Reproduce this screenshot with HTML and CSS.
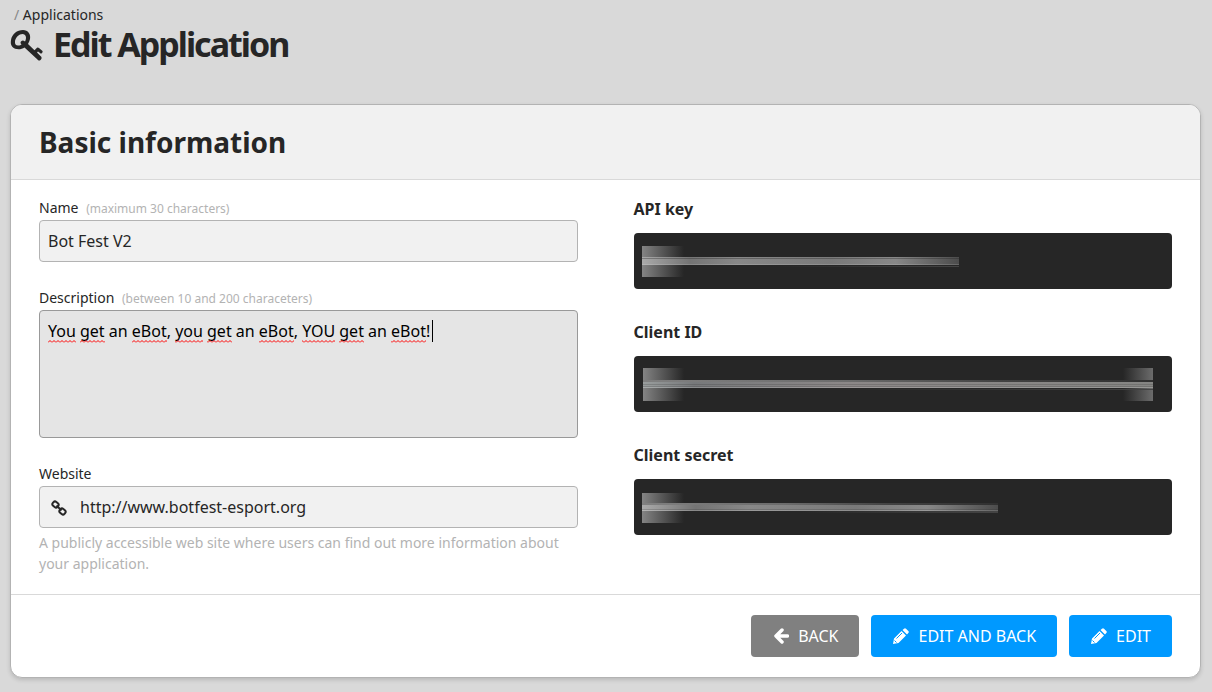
FILE: index.html
```
<!DOCTYPE html>
<html lang="en">

<head>
    <meta charset="UTF-8">
    <meta name="viewport" content="width=device-width, initial-scale=1.0">
    <title>Edit Application</title>
    <link rel="stylesheet" href="styles.css">
</head>

<body>
    <header class="page-header">
        <nav class="breadcrumb"><span>/</span> <a href="#">Applications</a></nav>
        <h1>
            <svg class="key-icon" viewBox="0 0 34 32" aria-hidden="true">
                <path d="M1 10 C2 4 7 0 13 0 C18 0 21 4 20 9 C19.500 11 18.500 13 18 14 L24.500 20.200 L27 17.800 Q28 17 29 18 L32.500 21 Q33 22 32 23 Q31 24 30 23 L28 21.500 L27 22.500 L31.500 27 Q32 29 30.500 30 Q29 31 28 30 L14.500 17.500 C11 20 5 19.800 2.500 17 C.8 15 .5 13 1 10 Z M5 11 C4.500 14 6 15.500 8 15.500 C10 15.500 11 15 11.500 14.500 Q9.500 12.500 11.500 11 Q13 10 15 11.500 C17 8 16 4 12.500 4 C9 4 6 7 5 11 Z" fill-rule="evenodd" />
            </svg>
            Edit Application
        </h1>
    </header>

    <form class="card">
        <div class="card-header">
            <h2>Basic information</h2>
        </div>
        <div class="card-body">
            <div class="column">
                <div class="form-group">
                    <label for="name">Name <small>(maximum 30 characters)</small></label>
                    <input type="text" id="name" maxlength="30" value="Bot Fest V2">
                </div>
                <div class="form-group">
                    <label for="description">Description <small>(between 10 and 200 characeters)</small></label>
                    <div class="textarea-wrap">
                        <textarea id="description" class="focused" maxlength="200" spellcheck="false">You get an eBot, you get an eBot, YOU get an eBot!</textarea>
                        <svg class="spelling" width="400" height="32" aria-hidden="true">
                            <defs>
                                <pattern id="wave" width="4" height="3" patternUnits="userSpaceOnUse">
                                    <path d="M0 2.500 L2 .5 L4 2.500" fill="none" stroke="#f00" />
                                </pattern>
                            </defs>
                            <g fill="url(#wave)">
                                <rect x="0" y="21" width="28" height="3" />
                                <rect x="32" y="21" width="25" height="3" />
                                <rect x="84" y="21" width="35" height="3" />
                                <rect x="127" y="21" width="28" height="3" />
                                <rect x="159" y="21" width="25" height="3" />
                                <rect x="211" y="21" width="35" height="3" />
                                <rect x="254" y="21" width="33" height="3" />
                                <rect x="291" y="21" width="25" height="3" />
                                <rect x="343" y="21" width="35" height="3" />
                            </g>
                            <rect x="384" y="1" width="1" height="22" fill="#000" />
                        </svg>
                    </div>
                </div>
                <div class="form-group">
                    <label for="website">Website</label>
                    <div class="input-icon">
                        <svg viewBox="0 0 16 16" aria-hidden="true">
                            <rect x="1.500" y="2" width="6" height="5" rx="2" transform="rotate(40 4.500 4.500)" />
                            <rect x="8.500" y="9" width="6" height="5" rx="2" transform="rotate(40 11.500 11.500)" />
                            <path d="M5.500 5.500 L10.500 10.500" />
                        </svg>
                        <input type="text" id="website" value="http://www.botfest-esport.org">
                    </div>
                    <p class="help">A publicly accessible web site where users can find out more information about your application.</p>
                </div>
            </div>

            <div class="column">
                <h3>API key</h3>
                <div class="secret">
                    <svg width="520" height="56" aria-hidden="true">
                        <defs>
                            <linearGradient id="fade-out">
                                <stop offset="0" stop-color="#848484" />
                                <stop offset="1" stop-color="#262626" />
                            </linearGradient>
                            <linearGradient id="fade-in">
                                <stop offset="0" stop-color="#262626" />
                                <stop offset="1" stop-color="#6c6c6c" />
                            </linearGradient>
                            <linearGradient id="streak">
                                <stop offset="0" stop-color="#aaa" />
                                <stop offset=".15" stop-color="#747474" />
                                <stop offset=".3" stop-color="#888" />
                                <stop offset=".6" stop-color="#7a7a7a" />
                                <stop offset=".8" stop-color="#888" />
                                <stop offset="1" stop-color="#4c4c4c" />
                            </linearGradient>
                            <linearGradient id="streak-full">
                                <stop offset="0" stop-color="#9a9e9e" />
                                <stop offset=".1" stop-color="#77797b" />
                                <stop offset=".4" stop-color="#8c8888" />
                                <stop offset="1" stop-color="#858583" />
                            </linearGradient>
                            <linearGradient id="trail">
                                <stop offset="0" stop-color="#262626" />
                                <stop offset="1" stop-color="#444" />
                            </linearGradient>
                            <linearGradient id="edge">
                                <stop offset="0" stop-color="#808080" />
                                <stop offset=".4" stop-color="#6c6c6c" />
                                <stop offset=".7" stop-color="#424242" />
                                <stop offset="1" stop-color="#303030" />
                            </linearGradient>
                        </defs>
                        <rect x="0" y="13" width="42" height="31" fill="url(#fade-out)" />
                        <rect x="0" y="24" width="317" height="8" fill="url(#streak)" />
                        <path d="M0 25.500 H317" stroke="#262626" stroke-opacity=".35" />
                        <path d="M0 31.500 H317" stroke="#fff" stroke-opacity=".15" />
                        <rect x="130" y="33" width="187" height="1" fill="url(#trail)" />
                    </svg>
                </div>
                <h3>Client ID</h3>
                <div class="secret">
                    <svg width="520" height="56" aria-hidden="true">
                        <rect x="1" y="12" width="41" height="33" fill="url(#fade-out)" />
                        <rect x="481" y="12" width="30" height="33" fill="url(#fade-in)" />
                        <rect x="1" y="24" width="510" height="2" fill="url(#edge)" />
                        <rect x="1" y="26" width="510" height="6" fill="url(#streak-full)" />
                        <path d="M1 28.500 H511 M1 30.500 H511" stroke="#262626" stroke-opacity=".2" />
                        <path d="M1 31.500 H511" stroke="#fff" stroke-opacity=".15" />
                        <rect x="200" y="33" width="311" height="1" fill="url(#trail)" />
                    </svg>
                </div>
                <h3>Client secret</h3>
                <div class="secret">
                    <svg width="520" height="56" aria-hidden="true">
                        <rect x="0" y="14" width="42" height="30" fill="url(#fade-out)" />
                        <rect x="0" y="24" width="356" height="2" fill="url(#edge)" />
                        <rect x="0" y="26" width="356" height="6" fill="url(#streak)" />
                        <path d="M0 30.500 H356" stroke="#262626" stroke-opacity=".2" />
                        <path d="M0 31.500 H356" stroke="#fff" stroke-opacity=".15" />
                        <rect x="160" y="32" width="196" height="2" fill="url(#trail)" />
                    </svg>
                </div>
            </div>
        </div>
        <div class="card-footer">
            <button type="button" class="btn btn-back">
                <svg viewBox="0 0 16 16" aria-hidden="true">
                    <path d="M9 2 L3 8 L9 14 M3 8 H14.500" fill="none" stroke="#fff" stroke-width="3.500" stroke-linecap="round" stroke-linejoin="round" />
                </svg>
                BACK
            </button>
            <button type="submit" class="btn">
                <svg viewBox="0 0 16 16" aria-hidden="true">
                    <path d="M0 16 L1 10.500 L8.500 3 L13 7.500 L5.500 15 Z M9.500 2 L11 .7 Q12 -.3 13 .7 L15.300 3 Q16.300 4 15.300 5 L14 6.500 Z" fill="#fff" />
                    <path d="M3.500 10.500 L9 5 M1.500 12.500 L3.500 14.500" stroke="#09f" stroke-width="1" />
                </svg>
                EDIT AND BACK
            </button>
            <button type="submit" class="btn">
                <svg viewBox="0 0 16 16" aria-hidden="true">
                    <path d="M0 16 L1 10.500 L8.500 3 L13 7.500 L5.500 15 Z M9.500 2 L11 .7 Q12 -.3 13 .7 L15.300 3 Q16.300 4 15.300 5 L14 6.500 Z" fill="#fff" />
                    <path d="M3.500 10.500 L9 5 M1.500 12.500 L3.500 14.500" stroke="#09f" stroke-width="1" />
                </svg>
                EDIT
            </button>
        </div>
    </form>
</body>
</html>
```
FILE: styles.css
```
* {
    box-sizing: border-box;
}

body {
    font-family: "Noto Sans", sans-serif;
    font-size: 16px;
    line-height: 24px;
    margin: 0;
    padding: 4px 11px 14px 10px;
    background-color: #d9d9d9;
    color: #262626;
}

h1,
h2,
h3,
p {
    margin: 0;
}

.page-header {
    margin-bottom: 42px;
}

.breadcrumb {
    padding-left: 4px;
    font-size: 14px;
    line-height: 22px;
}

.breadcrumb span {
    color: #888;
}

.breadcrumb a {
    color: #262626;
    text-decoration: none;
}

h1 {
    display: flex;
    align-items: flex-end;
    gap: 9px;
    font-size: 34px;
    line-height: 36px;
    letter-spacing: -2px;
}

.key-icon {
    width: 34px;
    height: 32px;
    fill: #262626;
}

.card {
    background-color: #fff;
    border: 1px solid #b3b3b3;
    border-radius: 12px;
    box-shadow: 0 2px 4px rgba(0, 0, 0, 0.15);
    overflow: hidden;
}

.card-header {
    padding: 16px 28px;
    background-color: #f1f1f1;
    border-bottom: 1px solid #d9d9d9;
}

h2 {
    font-size: 28px;
    line-height: 42px;
}

.card-body {
    display: grid;
    grid-template-columns: 1fr 1fr;
    gap: 56px;
    padding: 16px 28px 20px;
}

.form-group {
    margin-bottom: 24px;
}

.form-group:last-child {
    margin-bottom: 0;
}

.form-group label {
    display: block;
    font-size: 14px;
}

.form-group small {
    margin-left: 4px;
    font-size: 12px;
    line-height: 12px;
    color: #b3b3b3;
}

.form-group input,
.form-group textarea {
    display: block;
    width: 100%;
    height: 42px;
    padding: 8px;
    border: 1px solid #b3b3b3;
    border-radius: 4px;
    background-color: #f1f1f1;
    color: #262626;
    font: inherit;
    outline: none;
}

.form-group textarea {
    height: 128px;
    resize: none;
}

.form-group .focused {
    border-color: #999;
    background-color: #e5e5e5;
    color: #000;
}

.textarea-wrap,
.input-icon {
    position: relative;
}

/* spelling marks and caret over the text */
.spelling {
    position: absolute;
    top: 9px;
    left: 9px;
    pointer-events: none;
}

.input-icon svg {
    position: absolute;
    top: 14px;
    left: 12px;
    width: 16px;
    height: 16px;
    fill: none;
    stroke: #262626;
    stroke-width: 2;
}

.form-group .input-icon input {
    padding-left: 40px;
}

.help {
    padding-top: 4px;
    font-size: 14px;
    line-height: 21px;
    color: #b3b3b3;
}

h3 {
    margin-bottom: 10px;
    font-size: 16px;
    font-weight: 700;
    line-height: 27px;
}

.secret {
    height: 56px;
    margin-bottom: 30px;
    padding-left: 8px;
    border-radius: 4px;
    background-color: #262626;
    overflow: hidden;
}

.secret:last-child {
    margin-bottom: 0;
}

.secret svg {
    display: block;
}

.card-footer {
    display: flex;
    justify-content: flex-end;
    gap: 12px;
    padding: 20px 28px;
    border-top: 1px solid #d9d9d9;
}

.btn {
    display: flex;
    align-items: center;
    gap: 9px;
    height: 42px;
    padding: 0 21px 0 22px;
    border: none;
    border-radius: 4px;
    background-color: #09f;
    color: #fff;
    font: inherit;
    cursor: pointer;
}

.btn svg {
    width: 16px;
    height: 16px;
}

.btn-back {
    background-color: #808080;
}
```
